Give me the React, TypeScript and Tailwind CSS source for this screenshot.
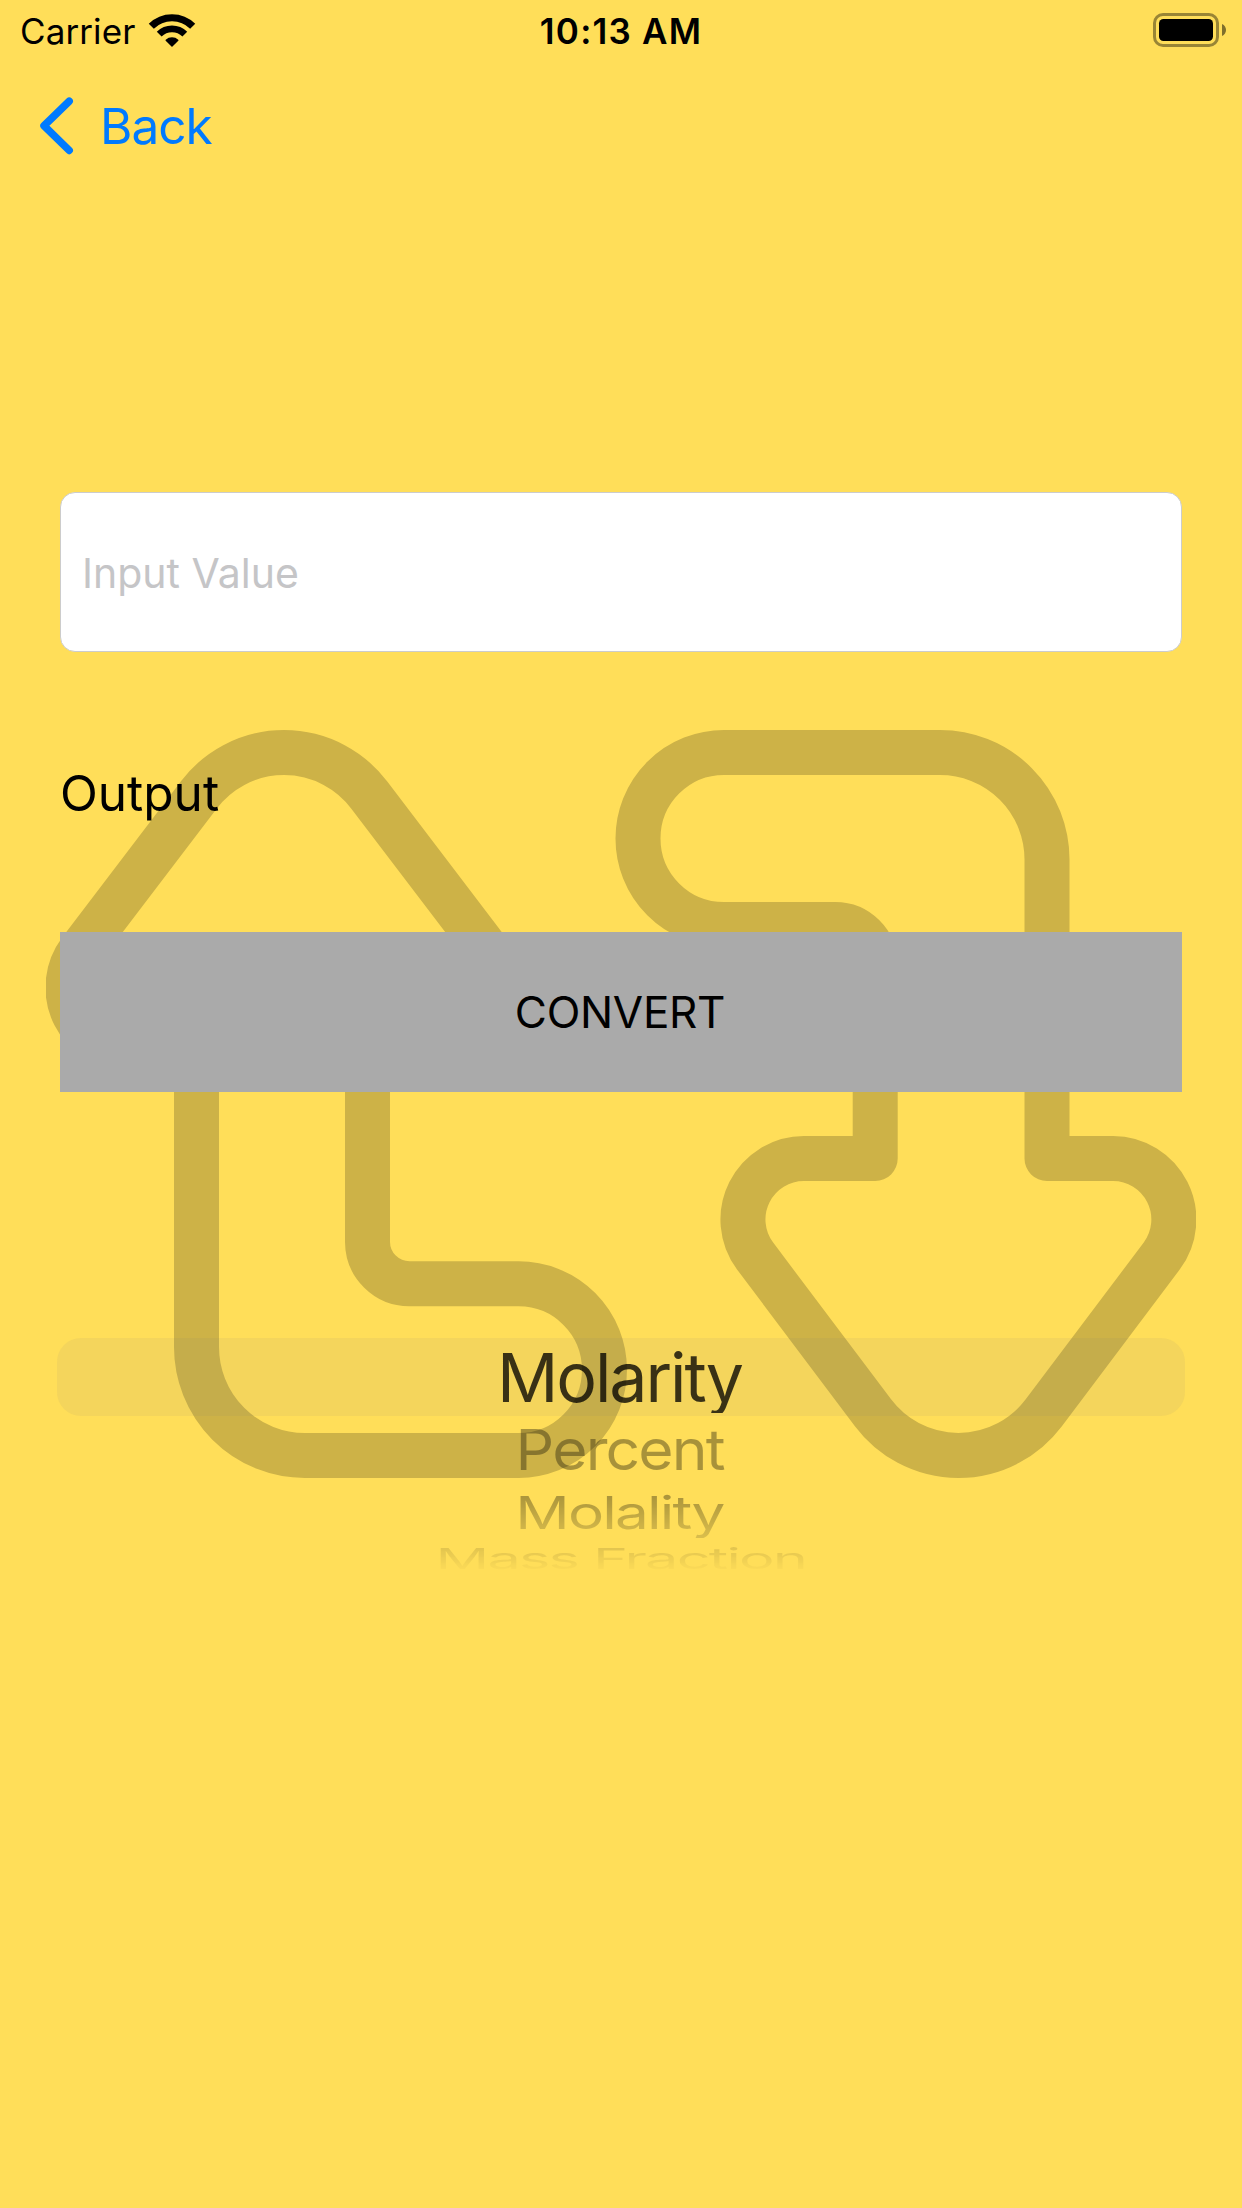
function WifiIcon() {
  return (
    <svg className="h-[35px] w-[48px]" viewBox="0 1 48 35" fill="none">
      <g stroke="#000">
        <path d="M3.3 13.3A29.3 29.3 0 0 1 44.7 13.3" strokeWidth="7.2" />
        <path d="M11.2 21.2A18.2 18.2 0 0 1 36.8 21.2" strokeWidth="6.8" />
      </g>
      <path
        d="M24 33L18.2 27.2A8.6 8.6 0 0 1 29.8 27.2Z"
        fill="#000"
        stroke="#000"
        strokeWidth="1.4"
        strokeLinejoin="round"
      />
    </svg>
  );
}

function BatteryIcon() {
  return (
    <svg className="h-[34px] w-[74px]" viewBox="0 0 74 34" fill="none">
      <rect x="1.5" y="1.5" width="63" height="31" rx="8.5" stroke="#000" strokeOpacity="0.4" strokeWidth="3" />
      <rect x="6" y="6" width="54" height="22" rx="4.5" fill="#000" />
      <path d="M69 11C71.6 12.2 73 14.4 73 17C73 19.6 71.6 21.8 69 23Z" fill="#000" fillOpacity="0.5" />
    </svg>
  );
}

function ConvertArrows() {
  return (
    <svg
      className="absolute left-[46px] top-[730px] h-[750px] w-[1150px]"
      viewBox="46 730 1150 750"
      fill="none"
      stroke="#CDB247"
      strokeWidth="45"
      strokeLinejoin="round"
    >
      <path d="M198.7 795.1A106.8 106.8 0 0 1 369.3 795.1L488 951.1A61 61 0 0 1 439 1048.5H367.5V1242A42 42 0 0 0 409.5 1283.8H518.7A85.85 85.85 0 0 1 518.7 1455.5H305A108.5 108.5 0 0 1 196.5 1347V1048.5H129A61 61 0 0 1 80 951.1Z" />
      <path d="M724 752.5H940A107 107 0 0 1 1047 859.5V1158.5H1113A61 61 0 0 1 1161.8 1255.9L1043.7 1412.9A106.8 106.8 0 0 1 873.1 1412.9L755 1255.9A61 61 0 0 1 804 1158.5H875.2V964.5A40 40 0 0 0 835.2 924.5H724A86 86 0 0 1 724 752.5Z" />
    </svg>
  );
}

function UnitPicker() {
  return (
    <div className="mx-[57px] flex h-[240px] w-[1128px] flex-col text-[68px] leading-none tracking-[-2.1px] text-black">
      <div className="flex h-[78px] items-center justify-center rounded-[24px] bg-[#767680]/8 pr-[3px]">
        <div className="flex h-[72px] items-center overflow-hidden px-2">
          <span className="text-black/77">Molarity</span>
        </div>
      </div>
      <div className="-mt-[4px] flex h-[73px] items-center justify-center pr-[2px]">
        <span className="scale-x-[0.892] scale-y-[0.83] text-black/34">Percent</span>
      </div>
      <div className="flex h-[53px] items-center justify-center pr-[3px] [mask-image:linear-gradient(to_bottom,rgba(0,0,0,0.34)_15%,rgba(0,0,0,0.14)_100%)]">
        <span className="scale-x-[0.887] scale-y-[0.668]">Molality</span>
      </div>
      <div className="flex h-[40px] items-center justify-center [mask-image:linear-gradient(to_bottom,rgba(0,0,0,0.13)_15%,rgba(0,0,0,0.01)_80%)]">
        <span className="scale-x-[0.875] scale-y-[0.425] whitespace-nowrap">Mass Fraction</span>
      </div>
    </div>
  );
}

export default function App() {
  return (
    <div className="relative h-[2208px] w-[1242px] overflow-hidden bg-[#FFDE59] font-['Inter',sans-serif] text-black">
      <ConvertArrows />
      <div className="relative flex flex-col">
        <header className="grid h-[62px] grid-cols-3 items-center text-[35px] leading-none">
          <div className="flex items-center gap-[13px] pl-5">
            <span className="tracking-[0.1px]">Carrier</span>
            <WifiIcon />
          </div>
          <span className="text-center font-[560] tracking-[1.2px]">10:13 AM</span>
          <div className="flex justify-end pr-[15px] pb-[2px]">
            <BatteryIcon />
          </div>
        </header>

        <button className="mt-[30px] flex h-[68px] items-center self-start pl-9 text-[49.5px] leading-none tracking-[-1px] text-[#007AFF]">
          <svg className="h-[68px] w-[64px]" viewBox="36 92 64 68" fill="none">
            <path
              d="M69.2 101.2L44 125.8L69.2 150.4"
              stroke="currentColor"
              strokeWidth="7.5"
              strokeLinecap="round"
              strokeLinejoin="round"
            />
          </svg>
          <span className="pt-[2px]">Back</span>
        </button>

        <main className="mt-[332px] flex flex-col">
          <input
            className="mx-[60px] h-[160px] rounded-[15px] border border-[#CCCCCC] bg-white pt-[2px] pl-[21px] text-[41px] text-black outline-none placeholder:text-[#C5C5C7] placeholder:opacity-100"
            placeholder="Input Value"
          />
          <p className="mt-[109px] ml-[60px] flex h-[65px] items-center text-[49.5px] leading-none">Output</p>
          <button className="mx-[60px] mt-[106px] flex h-[160px] items-center justify-center bg-[#AAAAAA] pr-[2px] text-[44px] leading-none tracking-[-0.3px]">
            CONVERT
          </button>
          <div className="mt-[246px]">
            <UnitPicker />
          </div>
        </main>
      </div>
    </div>
  );
}
